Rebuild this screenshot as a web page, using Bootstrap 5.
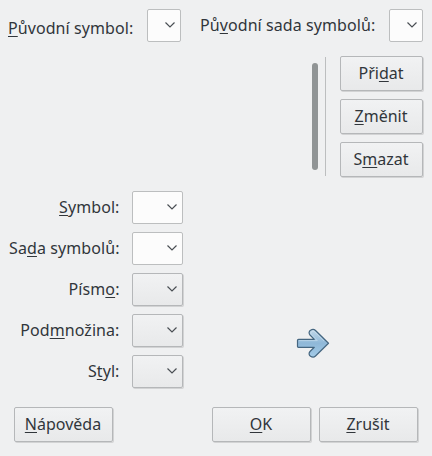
<!DOCTYPE html>
<html lang="cs">
<head>
<meta charset="utf-8">
<meta name="viewport" content="width=device-width, initial-scale=1">
<title>Symboly</title>
<link href="https://cdn.jsdelivr.net/npm/bootstrap@5.3.0/dist/css/bootstrap.min.css" rel="stylesheet">
<style>
body { background: #eff0f1; color: #31363b; font: 16px/24px "Noto Sans", sans-serif; overflow: hidden; }
.dialog { width: 432px; height: 456px; }
u { text-decoration-thickness: 1px; text-underline-offset: 2px; text-decoration-skip-ink: none; }
label { letter-spacing: .08px; }
.top-bar { height: 56px; padding: 9px 9px 0 8px; }
.top-bar label { white-space: nowrap; }
.first-label { width: 139px; padding-top: 7px; }
.second-label { width: 189px; padding-top: 4px; }
.picker { width: 51px; height: 33px; padding: 0 4px 1px 0; border: 1px solid #bcbebf; background: #fcfcfc; border-radius: 2px; }
.picker-narrow { width: 34px; }
.picker svg { width: 12px; height: 8px; fill: none; stroke: #4a4f54; stroke-width: 1.2; }
.raised, .raised:hover { color: #31363b; border: 1px solid #b5b7b9; background: linear-gradient(#f1f2f3, #e8e9ea); box-shadow: 1px 1px 0 #d2d3d4; border-radius: 2px; }
.push { height: 35px; padding: 0 1px 1px 0; font-size: 16px; line-height: 32px; }
.list-area { height: 135px; padding-right: 9px; }
.scroll-thumb { width: 6px; height: 107px; margin: 7px 7px 0 0; background: #909495; }
.divider { width: 1px; height: 119px; margin: 1px 14px 0 0; background: #bcbebf; }
.side-buttons { width: 83px; }
.form-rows { width: 183px; }
.form-rows label { line-height: 32px; margin-right: 12.5px; }
.arrow-box { padding: 137px 0 0 113px; }
.footer-bar { padding: 19px 14px 0; }
.footer-bar .push { width: 99px; }
</style>
<script src="https://cdn.jsdelivr.net/npm/bootstrap@5.3.0/dist/js/bootstrap.bundle.min.js"></script>
</head>
<body>
<svg width="0" height="0" class="d-none"><symbol id="chevron" viewBox="0 0 12 8"><path d="M1.500 1.500 6 6l4.500-4.500"/></symbol></svg>
<main class="dialog d-flex flex-column">
  <div class="top-bar d-flex align-items-start">
    <label class="first-label"><u>P</u>ůvodní symbol:</label>
    <button class="picker picker-narrow d-flex align-items-center justify-content-end" aria-label="Původní symbol"><svg><use href="#chevron"/></svg></button>
    <label class="second-label ms-auto">Pů<u>v</u>odní sada symbolů:</label>
    <button class="picker picker-narrow d-flex align-items-center justify-content-end" aria-label="Původní sada symbolů"><svg><use href="#chevron"/></svg></button>
  </div>
  <div class="list-area d-flex justify-content-end align-items-start">
    <div class="scroll-thumb rounded-pill"></div>
    <div class="divider"></div>
    <div class="side-buttons d-grid gap-2">
      <button class="btn push raised">Při<u>d</u>at</button>
      <button class="btn push raised"><u>Z</u>měnit</button>
      <button class="btn push raised">S<u>m</u>azat</button>
    </div>
  </div>
  <div class="d-flex align-items-start">
    <div class="form-rows d-flex flex-column gap-2">
      <div class="d-flex justify-content-end"><label><u>S</u>ymbol:</label><button class="picker d-flex align-items-center justify-content-end" aria-label="Symbol"><svg><use href="#chevron"/></svg></button></div>
      <div class="d-flex justify-content-end"><label>Sa<u>d</u>a symbolů:</label><button class="picker d-flex align-items-center justify-content-end" aria-label="Sada symbolů"><svg><use href="#chevron"/></svg></button></div>
      <div class="d-flex justify-content-end"><label>Písm<u>o</u>:</label><button class="picker raised d-flex align-items-center justify-content-end" aria-label="Písmo"><svg><use href="#chevron"/></svg></button></div>
      <div class="d-flex justify-content-end"><label>Pod<u>m</u>nožina:</label><button class="picker raised d-flex align-items-center justify-content-end" aria-label="Podmnožina"><svg><use href="#chevron"/></svg></button></div>
      <div class="d-flex justify-content-end"><label>S<u>t</u>yl:</label><button class="picker raised d-flex align-items-center justify-content-end" aria-label="Styl"><svg><use href="#chevron"/></svg></button></div>
    </div>
    <div class="arrow-box">
      <svg class="d-block" width="34" height="31" viewBox="0 0 34 31">
        <defs><linearGradient id="blue" x1="0" y1="0" x2="0" y2="1"><stop offset="0" stop-color="#c2d9ea"/><stop offset=".5" stop-color="#8fb8d8"/><stop offset="1" stop-color="#a3cbe8"/></linearGradient></defs>
        <path d="M2.500 11.300H18.300L14 7C12.500 5.300 13 3.300 14.500 2.300C16.200 1.100 18.200 1.200 19.500 2.500L32.500 15.300L19.500 28C18.200 29.300 16.200 29.400 14.500 28.200C13 27.200 12.500 25.200 14 23.500L18.300 19.300H2.500Q1.500 19.300 1.500 18.300V12.300Q1.500 11.300 2.500 11.300Z" fill="url(#blue)" stroke="#456680" stroke-width="1.200" stroke-linejoin="round"/>
        <path d="M3 12.600H21.300L15.300 6.500C14 4.500 16.500 2 18.500 3.500L28 13" fill="none" stroke="#e1eef7" stroke-width=".8" opacity=".5"/>
      </svg>
    </div>
  </div>
  <div class="footer-bar d-flex gap-2">
    <button class="btn push raised me-auto"><u>N</u>ápověda</button>
    <button class="btn push raised"><u>O</u>K</button>
    <button class="btn push raised"><u>Z</u>rušit</button>
  </div>
</main>
</body>
</html>
